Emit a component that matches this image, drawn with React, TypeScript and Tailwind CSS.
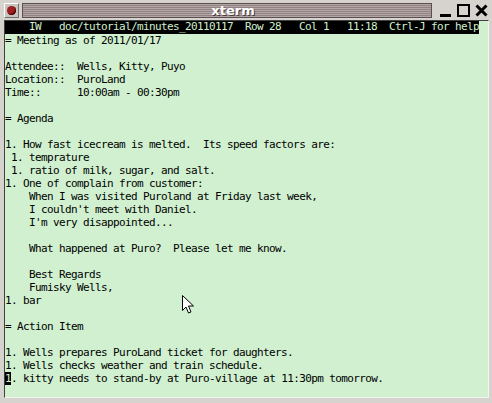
const lines = [
  "= Meeting as of 2011/01/17",
  "",
  "Attendee::  Wells, Kitty, Puyo",
  "Location::  PuroLand",
  "Time::      10:00am - 00:30pm",
  "",
  "= Agenda",
  "",
  "1. How fast icecream is melted.  Its speed factors are:",
  " 1. temprature",
  " 1. ratio of milk, sugar, and salt.",
  "1. One of complain from customer:",
  "    When I was visited Puroland at Friday last week,",
  "    I couldn't meet with Daniel.",
  "    I'm very disappointed...",
  "",
  "    What happened at Puro?  Please let me know.",
  "",
  "    Best Regards",
  "    Fumisky Wells,",
  "1. bar",
  "",
  "= Action Item",
  "",
  "1. Wells prepares PuroLand ticket for daughters.",
  "1. Wells checks weather and train schedule.",
];

const App = () => {
  return (
    <div className="relative w-[492px] h-[403px] bg-[#d6d3ce] flex flex-col overflow-hidden">
      {/* title bar */}
      <div className="h-[20px] flex items-center pl-[4px] pr-[4px] gap-[3px]">
        <div className="w-[15px] h-[15px] bg-[#c8c4c0] border border-t-white border-l-white border-b-[#707070] border-r-[#707070] flex items-center justify-center">
          <div className="w-[9px] h-[9px] rounded-full bg-[#a02020] shadow-[inset_-1px_-1px_1px_#400000]" />
        </div>
        <div className="flex-1 h-[15px] border border-[#5a5050] bg-[repeating-linear-gradient(to_bottom,#b3a5a6_0px,#b3a5a6_1px,#928384_1px,#928384_2px)] flex items-center justify-center pl-[12px]">
          <span className="text-white font-bold text-[13px] leading-none font-['DejaVu_Sans',sans-serif] [text-shadow:1px_1px_0_#4a3a3a]">
            xterm
          </span>
        </div>
        <div className="flex items-center gap-[5px] pl-[4px]">
          <svg width="13" height="13" viewBox="0 0 13 13">
            <rect x="1" y="10" width="11" height="3" fill="#000" />
          </svg>
          <svg width="13" height="13" viewBox="0 0 13 13">
            <rect x="1" y="1" width="11" height="11" fill="none" stroke="#000" strokeWidth="2" />
          </svg>
          <svg width="13" height="13" viewBox="0 0 13 13">
            <path d="M1.5 1.5 L11.5 11.5 M11.5 1.5 L1.5 11.5" stroke="#000" strokeWidth="3" />
          </svg>
        </div>
      </div>

      {/* terminal */}
      <div className="ml-[4px] w-[485px] h-[378px] border border-[#404040] border-b-[#f4f4f4] border-r-[#f4f4f4] bg-[#d0f0d0]">
        <div className="font-['DejaVu_Sans_Mono',monospace] text-[11px] tracking-[-0.62px] leading-[13px] text-black whitespace-pre">
          {/* status line, fields at their columns */}
          <div className="h-[13px] w-[474px] bg-black text-[#d0f0d0] flex items-start leading-[11px]">
            <span className="w-[24px] shrink-0" />
            <span className="w-[30px] shrink-0">IW</span>
            <span className="w-[186px] shrink-0">doc/tutorial/minutes_20110117</span>
            <span className="w-[54px] shrink-0">Row 28</span>
            <span className="w-[48px] shrink-0">Col 1</span>
            <span className="w-[42px] shrink-0">11:18</span>
            <span className="w-[90px] shrink-0">Ctrl-J for help</span>
          </div>
          {lines.map((l, i) => (
            <div key={i} className="h-[13px]">
              {l}
            </div>
          ))}
          <div className="h-[13px]">
            <span className="bg-black text-[#d0f0d0]">1</span>
            . kitty needs to stand-by at Puro-village at 11:30pm tomorrow.
          </div>
        </div>
      </div>

      {/* mouse pointer */}
      <svg className="absolute left-[182px] top-[295px]" width="13" height="20" viewBox="0 0 13 20">
        <path
          d="M0.5 0.5 L0.5 15.5 L4 12 L6.5 18 L9 17 L6.5 11 L11.5 11 Z"
          fill="#fff"
          stroke="#000"
          strokeWidth="1"
        />
      </svg>
    </div>
  );
};

export default App;
